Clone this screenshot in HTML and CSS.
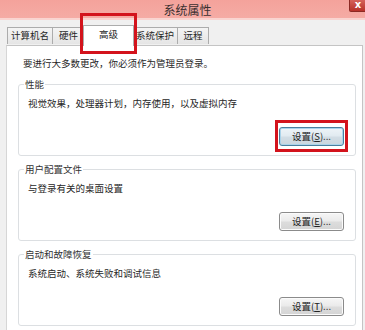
FILE: index.html
```html
<!DOCTYPE html>
<html lang="zh-CN">
<head>
<meta charset="utf-8">
<title>系统属性</title>
<link rel="stylesheet" href="styles.css">
</head>
<body>
<div class="window">
  <div class="titlebar">
    <span class="title">系统属性</span>
    <div class="close">x</div>
  </div>
  <div class="tabs">
    <div class="tab">计算机名</div>
    <div class="tab">硬件</div>
    <div class="tab selected">高级</div>
    <div class="tab">系统保护</div>
    <div class="tab last">远程</div>
  </div>
  <div class="panel">
    <p class="intro">要进行大多数更改，你必须作为管理员登录。</p>
    <fieldset class="group">
      <legend>性能</legend>
      <p class="desc">视觉效果，处理器计划，内存使用，以及虚拟内存</p>
      <div class="actions"><button class="btn default">设置(<u>S</u>)...</button></div>
    </fieldset>
    <fieldset class="group">
      <legend>用户配置文件</legend>
      <p class="desc">与登录有关的桌面设置</p>
      <div class="actions"><button class="btn">设置(<u>E</u>)...</button></div>
    </fieldset>
    <fieldset class="group">
      <legend>启动和故障恢复</legend>
      <p class="desc">系统启动、系统失败和调试信息</p>
      <div class="actions"><button class="btn">设置(<u>T</u>)...</button></div>
    </fieldset>
  </div>
  <div class="highlight hl-tab"></div>
  <div class="highlight hl-btn"></div>
</div>
</body>
</html>
```
FILE: styles.css
```css
* { box-sizing: border-box; }
html, body {
  margin: 0;
  padding: 0;
}
body {
  width: 365px;
  height: 330px;
  overflow: hidden;
  background: #f0f0f0;
  font-family: "Noto Sans CJK SC", "Noto Sans", sans-serif;
  font-size: 9.5px;
  color: #262626;
}
.window {
  position: relative;
  width: 365px;
  height: 330px;
}
.titlebar {
  height: 20px;
  background: linear-gradient(#f4a29b, #f5aba4);
  border-bottom: 2px solid #f9d4d0;
  display: flex;
  justify-content: center;
  align-items: center;
  padding-left: 10px;
}
.title {
  font-size: 12px;
  line-height: 14px;
  color: #3a3030;
  margin-top: 1px;
}
.close {
  position: absolute;
  top: 0;
  right: -2px;
  width: 18px;
  height: 12px;
  background: linear-gradient(#d5625b, #b73129);
  border: 1px solid #8c2a24;
  border-top: none;
  border-radius: 0 0 2px 2px;
  color: #fff;
  font-family: "DejaVu Sans", sans-serif;
  font-weight: bold;
  font-size: 10px;
  line-height: 10px;
  text-align: center;
}
.tabs {
  display: flex;
  align-items: flex-end;
  height: 25px;
  padding-left: 7px;
  position: relative;
  z-index: 1;
}
.tab {
  height: 17px;
  line-height: 15px;
  padding: 0 3px;
  min-width: 32px;
  text-align: center;
  border: 1px solid #acacac;
  border-right: none;
  border-bottom: none;
  background: linear-gradient(#f4f4f4, #e5e5e5);
  white-space: nowrap;
  margin-bottom: 1px;
}
.tab.last {
  border-right: 1px solid #acacac;
}
.tab.selected {
  height: 21px;
  min-width: 51px;
  margin: 0 -1px -1px -1px;
  background: #fff;
  border-right: 1px solid #acacac;
  line-height: 17px;
  position: relative;
  z-index: 2;
}
.tab.selected + .tab {
  border-left: none;
}
.panel {
  margin-left: 6px;
  width: 357px;
  height: 290px;
  background: #fff;
  border: 1px solid #c4c4c4;
  border-left-color: #d6d6d6;
  padding: 11px 6px 0 11px;
}
.intro {
  margin: 0 0 9px 5px;
  line-height: 12px;
}
.group {
  margin: 0;
  padding: 7px 11px 9px 9px;
  border: 1px solid #dcdfe2;
  border-radius: 3px;
  min-inline-size: 0;
}
.group + .group {
  margin-top: 7px;
}
.group legend {
  padding: 0 1px;
  margin-left: -4px;
  line-height: 12px;
  height: 12px;
  color: #333;
}
.desc {
  margin: 0;
  line-height: 12px;
}
.actions {
  display: flex;
  justify-content: flex-end;
  margin-top: 18px;
}
.btn {
  width: 65px;
  height: 19px;
  padding: 0;
  font-family: inherit;
  font-size: 9.5px;
  line-height: 15px;
  color: #222;
  background: linear-gradient(#f6f6f6, #ebebeb 45%, #dcdcdc 55%, #d4d4d4);
  border: 1px solid #8b8b8b;
  border-radius: 3px;
  box-shadow: inset 0 0 0 1px #fbfbfb;
}
.btn.default {
  border-color: #4a7f9e;
  box-shadow: inset 0 0 0 1px #a9d3ea;
  background: linear-gradient(#eef4f8, #e2ebf1 45%, #d2dde5 55%, #c9d6de);
}
.btn u {
  text-underline-offset: 1px;
}
.highlight {
  position: absolute;
  border: 3px solid #d3131c;
  z-index: 5;
}
.hl-tab {
  left: 80px;
  top: 13px;
  width: 57px;
  height: 41px;
}
.hl-btn {
  left: 275px;
  top: 120px;
  width: 73px;
  height: 32px;
}
```
